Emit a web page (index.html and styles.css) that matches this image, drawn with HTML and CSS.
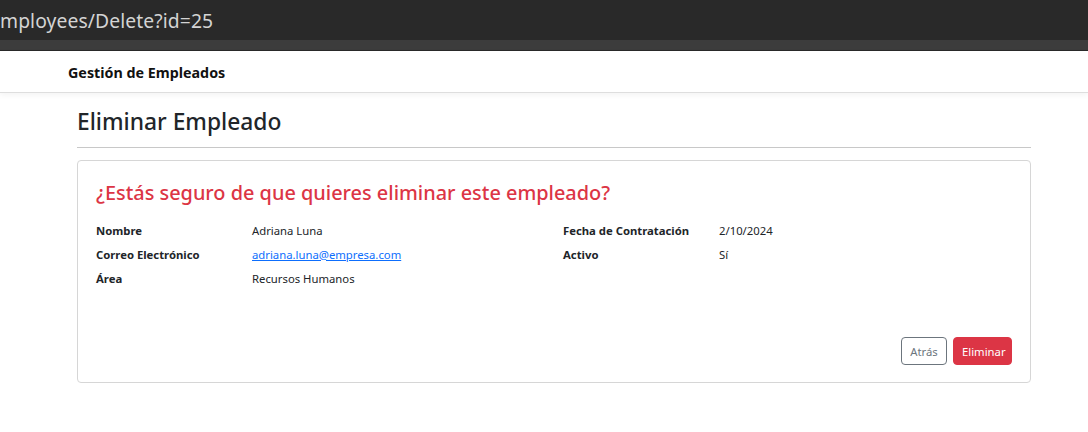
FILE: index.html
```html
<!DOCTYPE html>
<html lang="es">
<head>
<meta charset="utf-8">
<title>Eliminar Empleado</title>
<link rel="stylesheet" href="styles.css">
</head>
<body>
<div class="urlbar"><span class="url">mployees/Delete?id=25</span></div>
<div class="tabstrip"></div>
<nav class="navbar"><span class="brand">Gestión de Empleados</span></nav>
<main class="content">
  <h1 class="page-title">Eliminar Empleado</h1>
  <hr class="divider">
  <section class="card">
    <h2 class="card-title">¿Estás seguro de que quieres eliminar este empleado?</h2>
    <div class="details">
      <dl class="col">
        <dt>Nombre</dt><dd>Adriana Luna</dd>
        <dt>Correo Electrónico</dt><dd><a href="#">adriana.luna@empresa.com</a></dd>
        <dt>Área</dt><dd>Recursos Humanos</dd>
      </dl>
      <dl class="col">
        <dt>Fecha de Contratación</dt><dd>2/10/2024</dd>
        <dt>Activo</dt><dd>Sí</dd>
      </dl>
    </div>
    <div class="actions">
      <button class="btn btn-outline">Atrás</button>
      <button class="btn btn-danger">Eliminar</button>
    </div>
  </section>
</main>
</body>
</html>
```
FILE: styles.css
```css
* { box-sizing: border-box; }
html, body { margin: 0; padding: 0; }
body {
  font-family: "Noto Sans", "Open Sans", sans-serif;
  color: #212529;
  background: #fff;
  width: 1088px;
  height: 432px;
  overflow: hidden;
}
.urlbar {
  height: 40px;
  background: #292929;
  display: flex;
  align-items: center;
}
.url {
  color: #d4d4d4;
  font-size: 19.3px;
  letter-spacing: 0.1px;
}
.tabstrip {
  height: 11px;
  background: #3c3c3c;
  border-bottom: 1px solid #2a2a2a;
}
.navbar {
  height: 42px;
  display: flex;
  align-items: center;
  padding-left: 68px;
  padding-top: 2px;
  border-bottom: 1px solid #dedede;
  box-shadow: 0 2px 6px rgba(0,0,0,0.05);
}
.brand {
  font-weight: 700;
  font-size: 14.3px;
  color: #111;
}
.content {
  margin-left: 77px;
  width: 954px;
  padding-top: 14px;
}
.page-title {
  margin: 0;
  font-size: 22.8px;
  font-weight: 500;
  line-height: 30px;
}
.divider {
  margin: 10px 0 12px;
  border: 0;
  border-top: 1px solid #c8c8c8;
}
.card {
  border: 1px solid #d6d6d6;
  border-radius: 4px;
  height: 223px;
  padding: 17px 18px;
  display: flex;
  flex-direction: column;
}
.card-title {
  margin: 0;
  color: #dc3545;
  font-size: 19.9px;
  font-weight: 500;
  line-height: 30px;
}
.details {
  display: flex;
  margin-top: 10px;
}
.col {
  margin: 0;
  display: grid;
  grid-template-columns: 156px 1fr;
  grid-auto-rows: 24px;
  align-items: center;
  font-size: 11.3px;
}
.col:first-child { flex: 0 0 467px; }
.col:last-child { flex: 1; }
.col dt { font-weight: 700; }
.col dd { margin: 0; }
.col a { color: #0d6efd; text-decoration: underline; }
.actions {
  margin-top: auto;
  display: flex;
  justify-content: flex-end;
  gap: 6px;
}
.btn {
  font-family: inherit;
  font-size: 11.3px;
  height: 28px;
  border-radius: 4px;
  padding: 0 8px;
  cursor: pointer;
}
.btn-outline {
  background: #fff;
  border: 1px solid #6c757d;
  color: #6c757d;
  width: 46px;
}
.btn-danger {
  background: #dc3545;
  border: 1px solid #dc3545;
  color: #fff;
  width: 59px;
}
```
